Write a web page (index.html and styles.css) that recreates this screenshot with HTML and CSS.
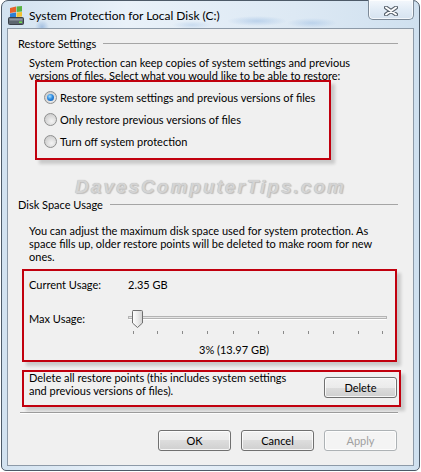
FILE: index.html
```html
<!DOCTYPE html>
<html lang="en">
<head>
  <meta charset="UTF-8">
  <meta name="viewport" content="width=device-width, initial-scale=1.0">
  <title>System Protection for Local Disk (C:)</title>
  <link rel="stylesheet" href="styles.css">
</head>
<body>
  <div class="window">
    <!-- Title bar -->
    <div class="titlebar">
      <svg class="app-icon" width="18" height="19" viewBox="0 0 18 19">
        <path d="M3 2 L9 0.5 L9 6 L3 7 Z" fill="#e8622a"/>
        <path d="M9.6 0.4 L15 0 L15 5.5 L9.6 6 Z" fill="#59b341"/>
        <path d="M3 7.6 L9 6.6 L9 11 L3 11.5 Z" fill="#2d7fd3"/>
        <path d="M9.6 6.5 L15 6 L15 10.5 L9.6 11 Z" fill="#f3c22e"/>
        <rect x="1.5" y="11.5" width="15" height="7" rx="1" fill="#5d6670" stroke="#3a4048"/>
        <rect x="2.5" y="12.5" width="13" height="2" fill="#8d969f"/>
        <rect x="12" y="15.5" width="3" height="1.5" fill="#6fe04a"/>
      </svg>
      <span class="title">System Protection for Local Disk (C:)</span>
      <button class="close" aria-label="Close">
        <svg width="14" height="10" viewBox="0 0 14 10">
          <path d="M2 1.5 L12 8.5 M12 1.5 L2 8.5" stroke="#56606b" stroke-width="4" stroke-linecap="round"/>
          <path d="M2 1.5 L12 8.5 M12 1.5 L2 8.5" stroke="#ffffff" stroke-width="2" stroke-linecap="round"/>
        </svg>
      </button>
    </div>

    <div class="panel">
      <!-- Restore settings -->
      <div class="group-title">Restore Settings</div>
      <p class="intro">System Protection can keep copies of system settings and previous<br>versions of files. Select what you would like to be able to restore:</p>
      <div class="mark mark-restore">
        <label class="radio checked"><span class="dot"></span>Restore system settings and previous versions of files</label>
        <label class="radio"><span class="dot"></span>Only restore previous versions of files</label>
        <label class="radio"><span class="dot"></span>Turn off system protection</label>
      </div>

      <div class="watermark">DavesComputerTips.com</div>

      <!-- Disk space usage -->
      <div class="group-title group-disk">Disk Space Usage</div>
      <p class="intro intro-disk">You can adjust the maximum disk space used for system protection. As<br>space fills up, older restore points will be deleted to make room for new<br>ones.</p>
      <div class="mark mark-usage">
        <div class="usage-row">
          <span class="usage-label">Current Usage:</span>
          <span>2.35 GB</span>
        </div>
        <div class="usage-row slider-row">
          <span class="usage-label">Max Usage:</span>
          <svg class="slider" width="259" height="27" viewBox="0 0 259 27">
            <rect x="0.5" y="8.5" width="258" height="2" fill="#e6e6e6" stroke="#b4b4b4"/>
            <line x1="0.5" y1="11.5" x2="258.5" y2="11.5" stroke="#ffffff"/>
            <g stroke="#8a8a8a">
              <line x1="5.5" y1="23" x2="5.5" y2="26"/>
              <line x1="29.5" y1="23" x2="29.5" y2="26"/>
              <line x1="54.5" y1="23" x2="54.5" y2="26"/>
              <line x1="79.5" y1="23" x2="79.5" y2="26"/>
              <line x1="105.5" y1="23" x2="105.5" y2="26"/>
              <line x1="130.5" y1="23" x2="130.5" y2="26"/>
              <line x1="155.5" y1="23" x2="155.5" y2="26"/>
              <line x1="180.5" y1="23" x2="180.5" y2="26"/>
              <line x1="205.5" y1="23" x2="205.5" y2="26"/>
              <line x1="230.5" y1="23" x2="230.5" y2="26"/>
              <line x1="254.5" y1="23" x2="254.5" y2="26"/>
            </g>
            <defs>
              <linearGradient id="thumb" x1="0" y1="0" x2="1" y2="0">
                <stop offset="0" stop-color="#ffffff"/>
                <stop offset="0.5" stop-color="#ececec"/>
                <stop offset="1" stop-color="#d2d2d2"/>
              </linearGradient>
            </defs>
            <path d="M5 2.5 Q4.5 2.5 4.5 3.5 L4.5 15 L9.5 19.5 L14.5 15 L14.5 3.5 Q14.5 2.5 13.5 2.5 Z" fill="url(#thumb)" stroke="#6f6f6f"/>
          </svg>
        </div>
        <div class="usage-value">3% (13.97 GB)</div>
      </div>

      <div class="mark mark-delete">
        <p class="delete-text">Delete all restore points (this includes system settings<br>and previous versions of files).</p>
        <button class="btn btn-delete">Delete</button>
      </div>

      <div class="separator"></div>

      <div class="actions">
        <button class="btn">OK</button>
        <button class="btn">Cancel</button>
        <button class="btn" disabled>Apply</button>
      </div>
    </div>
  </div>
</body>
</html>
```
FILE: styles.css
```css
body {
  margin: 0;
  background: #ffffff;
  font-family: Lato, "Liberation Sans", sans-serif;
  font-size: 11px;
  color: #000000;
}
.window {
  box-sizing: border-box;
  width: 419px;
  height: 471px;
  margin-left: 1px;
  border: 1px solid #4d5a68;
  border-radius: 7px 7px 5px 5px;
  background:
    radial-gradient(circle at 40px 26px, rgba(120, 160, 210, 0.55) 0, rgba(120, 160, 210, 0) 7px),
    radial-gradient(ellipse 30px 5px at 255px 20px, rgba(150, 185, 225, 0.5), rgba(150, 185, 225, 0)),
    radial-gradient(ellipse 25px 5px at 310px 22px, rgba(150, 185, 225, 0.45), rgba(150, 185, 225, 0)),
    radial-gradient(ellipse 20px 4px at 190px 24px, rgba(150, 185, 225, 0.35), rgba(150, 185, 225, 0)),
    linear-gradient(to right, #d2e2f0, #e9f1f9 30%, #dde9f4 70%, #cfe0ef);
  display: flex;
  flex-direction: column;
}
.titlebar {
  height: 27px;
  display: flex;
  align-items: center;
}
.app-icon {
  margin-left: 5px;
  margin-top: 1px;
}
.title {
  margin-left: 4px;
  font-size: 12px;
  padding-top: 1px;
}
.close {
  margin: -1px 5px 0 auto;
  align-self: flex-start;
  width: 46px;
  height: 20px;
  padding: 0;
  border: 1px solid #7d8a98;
  border-top: none;
  border-radius: 0 0 5px 5px;
  background: linear-gradient(#f4f8fc, #e2ecf6 50%, #d6e3f0);
  box-shadow: inset 0 0 0 1px rgba(255, 255, 255, 0.7);
  display: flex;
  align-items: center;
  justify-content: center;
}
.close svg {
  margin-top: 3px;
}
.panel {
  box-sizing: border-box;
  height: 438px;
  margin: 0 5px;
  border: 1px solid #8d9aa8;
  background: #f0f0f0;
}
.group-title {
  display: flex;
  align-items: center;
  gap: 7px;
  margin: 8px 15px 0 10px;
  line-height: 13px;
}
.group-title::after {
  content: "";
  flex: 1;
  border-top: 1px solid #a5a5a5;
}
.group-disk {
  margin-top: 0;
}
.intro {
  margin: 6px 0 0 21px;
  line-height: 13px;
}
.intro-disk {
  margin-top: 13px;
}
.mark {
  box-sizing: border-box;
  border: 2px solid #c1000e;
  box-shadow: 4px 4px 3px rgba(0, 0, 0, 0.16);
  position: relative;
}
.mark-restore {
  width: 296px;
  margin: -2px 0 0 27px;
  padding: 4px 0 6px 7px;
}
.radio {
  display: flex;
  align-items: center;
  gap: 3px;
  height: 22px;
}
.dot {
  box-sizing: border-box;
  width: 13px;
  height: 13px;
  border-radius: 50%;
  border: 1px solid #8e8f8f;
  background: radial-gradient(circle at 60% 65%, #f4f4f4 0, #d8d8d8 55%, #c4c4c4 100%);
  display: flex;
  align-items: center;
  justify-content: center;
}
.checked .dot::after {
  content: "";
  width: 7px;
  height: 7px;
  border-radius: 50%;
  background: radial-gradient(circle at 40% 35%, #a8e0ff 0, #2e8be0 45%, #0b4fa5 100%);
}
.watermark {
  margin: 16px 0 0 0;
  text-align: center;
  line-height: 22px;
  height: 22px;
  font-family: "Liberation Sans", sans-serif;
  font-style: italic;
  font-weight: bold;
  font-size: 19px;
  letter-spacing: 2px;
  color: #d4d4d4;
  text-shadow: 0 0 1px #ababab, 1px 1px 1px #c2c2c2;
}
.mark-usage {
  width: 375px;
  height: 93px;
  margin: 6px 0 0 14px;
  padding: 7px 0 0 5px;
}
.usage-row {
  display: flex;
  line-height: 13px;
}
.usage-label {
  width: 99px;
}
.slider-row {
  margin-top: 17px;
  align-items: flex-start;
}
.slider-row .usage-label {
  margin-top: 4px;
}
.usage-value {
  margin-top: 8px;
  padding-left: 44px;
  text-align: center;
  line-height: 13px;
}
.mark-delete {
  width: 379px;
  height: 37px;
  margin: 8px 0 0 14px;
  padding-left: 5px;
  display: flex;
  align-items: flex-start;
  justify-content: space-between;
}
.delete-text {
  margin: -1px 0 0 0;
  line-height: 13px;
}
.btn {
  box-sizing: border-box;
  width: 73px;
  height: 21px;
  padding: 0;
  border: 1px solid #707070;
  border-radius: 3px;
  background: linear-gradient(#f2f2f2, #ebebeb 50%, #dddddd 50%, #cfcfcf);
  box-shadow: inset 0 0 0 1px rgba(255, 255, 255, 0.8);
  font-family: Lato, "Liberation Sans", sans-serif;
  font-size: 11px;
  color: #000000;
}
.btn:disabled {
  border-color: #adb2b5;
  background: #f4f4f4;
  color: #a0a0a0;
}
.btn-delete {
  margin: 5px 2px 0 0;
}
.separator {
  width: 378px;
  margin: 5px 0 0 12px;
  border-top: 1px solid #a0a0a0;
  border-bottom: 1px solid #ffffff;
}
.actions {
  display: flex;
  justify-content: flex-end;
  gap: 10px;
  margin-top: 16px;
  padding-right: 16px;
}
```
